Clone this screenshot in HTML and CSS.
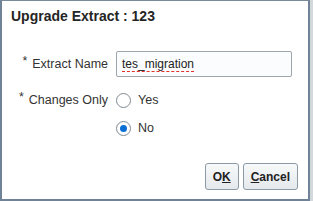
FILE: index.html
```html
<!DOCTYPE html>
<html>
<head>
<meta charset="utf-8">
<link rel="stylesheet" href="styles.css">
</head>
<body>
<div class="dialog">
  <div class="title">Upgrade Extract : 123</div>
  <div class="form">
    <div class="row row-name">
      <div class="label"><span class="req">*</span>Extract Name</div>
      <div class="input"><span class="spell">tes_migration</span></div>
    </div>
    <div class="row row-changes">
      <div class="label"><span class="req">*</span>Changes Only</div>
      <div class="radios">
        <div class="radio"><span class="circle"></span><span>Yes</span></div>
        <div class="radio"><span class="circle checked"></span><span>No</span></div>
      </div>
    </div>
  </div>
  <div class="footer">
    <button class="btn">O<u>K</u></button>
    <button class="btn"><u>C</u>ancel</button>
  </div>
</div>
</body>
</html>
```
FILE: styles.css
```css
html, body {
  margin: 0;
  padding: 0;
}
body {
  width: 313px;
  height: 201px;
  background: #d3d8dc;
  font-family: "Liberation Sans", Arial, sans-serif;
  overflow: hidden;
}
.dialog {
  box-sizing: border-box;
  width: 310px;
  height: 201px;
  background: #fff;
  border-top: 1px solid #7a8a9a;
  border-left: 2px solid #6f8296;
  border-right: 2px solid #6f8296;
  border-bottom: 2px solid #6f8296;
  display: flex;
  flex-direction: column;
}
.title {
  font-weight: bold;
  font-size: 14px;
  color: #252525;
  padding: 7px 0 0 9px;
  height: 23px;
}
.form {
  display: flex;
  flex-direction: column;
  padding-top: 20px;
}
.row {
  display: flex;
  align-items: flex-start;
}
.label {
  width: 114px;
  text-align: right;
  font-size: 12.5px;
  color: #333;
  padding-right: 8px;
  box-sizing: border-box;
}
.row-name .label {
  padding-top: 6px;
}
.req {
  margin-right: 5px;
  position: relative;
  top: -3px;
}
.input {
  box-sizing: border-box;
  width: 176px;
  height: 26px;
  border: 1px solid #9ea5ab;
  border-radius: 2px;
  background: #fbfcfd;
  font-size: 12px;
  color: #222;
  padding: 5px 0 0 5px;
}
.spell {
  text-decoration: underline dashed #e0312b;
  text-underline-offset: 3px;
  text-decoration-thickness: 1px;
}
.row-changes {
  margin-top: 15px;
}
.row-changes .label {
  padding-top: 1px;
}
.radios {
  display: flex;
  flex-direction: column;
  gap: 12px;
}
.radio {
  display: flex;
  align-items: center;
  gap: 7px;
  font-size: 12.5px;
  color: #333;
  height: 16px;
}
.circle {
  box-sizing: border-box;
  width: 15px;
  height: 15px;
  border: 1px solid #7f8a93;
  border-radius: 50%;
  background: #fff;
  display: flex;
  align-items: center;
  justify-content: center;
}
.circle.checked::after {
  content: "";
  width: 7px;
  height: 7px;
  border-radius: 50%;
  background: #0b6fd3;
}
.footer {
  margin-top: auto;
  display: flex;
  justify-content: flex-end;
  gap: 4px;
  padding: 0 10px 9px 0;
}
.btn {
  font-family: "Liberation Sans", Arial, sans-serif;
  font-weight: bold;
  font-size: 12px;
  color: #222;
  height: 27px;
  padding: 0 7px;
  border: 1px solid #8c9aa6;
  border-radius: 3px;
  background: linear-gradient(#f7f9fa, #e5e9ec);
  cursor: pointer;
}
.btn u {
  text-underline-offset: 1px;
}
```
